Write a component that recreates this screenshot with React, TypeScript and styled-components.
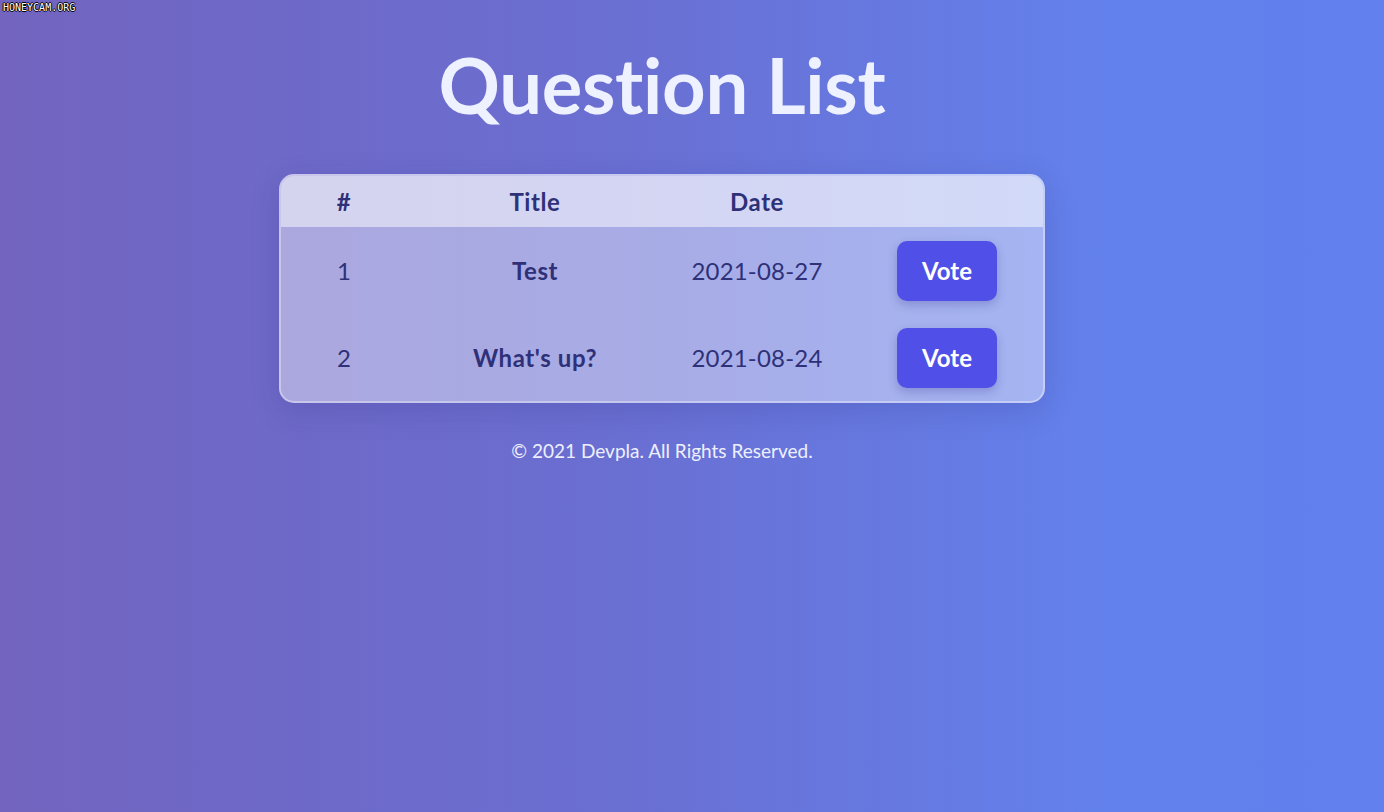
import React from "react";
import styled, { createGlobalStyle } from "styled-components";

const Global = createGlobalStyle`
  html, body { margin: 0; padding: 0; }
  body {
    min-height: 812px;
    background: linear-gradient(90deg, #7264bf 0%, #6a6fd2 45%, #6381ec 80%, #6280ee 100%);
    font-family: Lato, "Noto Sans", sans-serif;
  }
`;

const Page = styled.div`
  width: 1324px;
  min-height: 812px;
  display: flex;
  flex-direction: column;
  align-items: center;
`;

const Watermark = styled.div`
  position: absolute;
  top: 2px;
  left: 3px;
  font-family: "DejaVu Sans Mono", monospace;
  font-size: 10px;
  color: #fff;
  text-shadow: 1px 0 #000, -1px 0 #000, 0 1px #000, 0 -1px #000;
`;

const Title = styled.h1`
  margin: 38px 0 0;
  font-size: 76px;
  font-weight: 700;
  line-height: 94px;
  color: #eef1ff;
  letter-spacing: -0.3px;
`;

const Card = styled.div`
  margin-top: 42px;
  width: 762px;
  border: 2px solid rgba(255, 255, 255, 0.35);
  border-radius: 15px;
  background: rgba(255, 255, 255, 0.42);
  box-shadow: 0 8px 30px rgba(40, 40, 120, 0.18);
  overflow: hidden;
`;

const Row = styled.div<{ $head?: boolean }>`
  display: grid;
  grid-template-columns: 126px 256px 188px 192px;
  align-items: center;
  height: ${(p) => (p.$head ? "51px" : "87px")};
  background: ${(p) => (p.$head ? "rgba(255,255,255,0.5)" : "transparent")};
  color: #2e3178;
  font-size: 24px;
`;

const Cell = styled.div<{ $bold?: boolean }>`
  text-align: center;
  font-weight: ${(p) => (p.$bold ? 700 : 400)};
  letter-spacing: ${(p) => (p.$bold ? "0.6px" : "0.2px")};
`;

const VoteButton = styled.button`
  justify-self: center;
  width: 100px;
  height: 60px;
  border: none;
  border-radius: 10px;
  background: #5050e8;
  color: #fff;
  font-family: Lato, "Noto Sans", sans-serif;
  font-size: 24px;
  font-weight: 700;
  box-shadow: 0 4px 10px rgba(40, 40, 140, 0.25);
  cursor: pointer;
`;

const Footer = styled.p`
  margin: 36px 0 0;
  font-size: 19px;
  color: #eef0ff;
`;

const questions = [
  { id: 1, title: "Test", date: "2021-08-27" },
  { id: 2, title: "What's up?", date: "2021-08-24" },
];

export default function App() {
  return (
    <>
      <Global />
      <Watermark>HONEYCAM.ORG</Watermark>
      <Page>
        <Title>Question List</Title>
        <Card>
          <Row $head>
            <Cell $bold>#</Cell>
            <Cell $bold>Title</Cell>
            <Cell $bold>Date</Cell>
            <Cell />
          </Row>
          {questions.map((q) => (
            <Row key={q.id}>
              <Cell>{q.id}</Cell>
              <Cell $bold>{q.title}</Cell>
              <Cell>{q.date}</Cell>
              <VoteButton>Vote</VoteButton>
            </Row>
          ))}
        </Card>
        <Footer>© 2021 Devpla. All Rights Reserved.</Footer>
      </Page>
    </>
  );
}
